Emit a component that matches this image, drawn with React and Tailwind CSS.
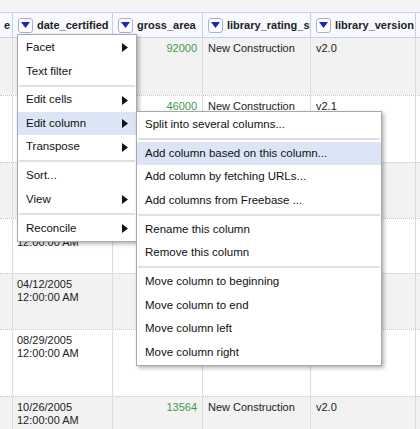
import React from "react";

function DropBtn() {
  return (
    <div className="w-[15px] h-[15px] shrink-0 rounded-[3px] border border-[#a3adea] bg-white flex items-center justify-center">
      <svg width="9" height="6" viewBox="0 0 9 6">
        <polygon points="0,0 9,0 4.5,6" fill="#1e22c8" />
      </svg>
    </div>
  );
}

function HeadCell({ w, label, last }) {
  return (
    <div className={`${w} h-full flex items-center gap-[4px] pl-[5px] overflow-hidden whitespace-nowrap ${last ? "" : "border-r border-[#c9cff0]"}`}>
      <DropBtn />
      <span className="font-bold text-[11px] text-[#222]">{label}</span>
    </div>
  );
}

function Row({ h, gray, top, date, date2, gross, rating, version }) {
  return (
    <div className={`flex ${h} shrink-0 ${gray ? "bg-[#f2f2f2]" : "bg-white"} ${top ? "" : "border-t border-dotted border-[#c8c8c8]"}`}>
      <div className="w-[13px] border-r border-[#dcdcdc]" />
      <div className="w-[100px] border-r border-[#dcdcdc] pl-[4px] pt-[4px] leading-[13px]">
        {date2 && (
          <>
            <div>{date || "\u00a0"}</div>
            <div>{date2}</div>
          </>
        )}
      </div>
      <div className="w-[90px] border-r border-[#dcdcdc] pr-[5px] pt-[4px] leading-[13px] text-right text-[#46984a]">{gross}</div>
      <div className="w-[108px] border-r border-[#dcdcdc] pl-[5px] pt-[4px] leading-[13px] whitespace-nowrap overflow-hidden">{rating}</div>
      <div className="w-[105px] border-r border-[#dcdcdc] pl-[5px] pt-[4px] leading-[13px]">{version}</div>
      <div className="flex-1" />
    </div>
  );
}

function Arrow() {
  return (
    <svg width="6" height="9" viewBox="0 0 6 9" className="absolute right-[8px]">
      <polygon points="0,0 6,4.5 0,9" fill="#111" />
    </svg>
  );
}

function Item({ label, sub, active }) {
  return (
    <div className={`relative h-[23.5px] flex items-center pl-[8px] whitespace-nowrap ${active ? "bg-[#dbe5f6]" : ""}`}>
      <span>{label}</span>
      {sub && <Arrow />}
    </div>
  );
}

function Sep() {
  return (
    <div className="h-[5.33px] flex items-center px-[1px]">
      <div className="h-[2px] w-full bg-[#e0e0e0]" />
    </div>
  );
}

export default function App() {
  return (
    <div className="relative w-[420px] h-[429px] overflow-hidden bg-white font-['Liberation_Sans',Arial,sans-serif] text-[11px] text-[#222]">
      <div className="h-[12px] bg-[#f4f4f4]" />
      <div className="flex h-[26px] bg-[#f8f9fe] border-y border-[#c9cff0]">
        <div className="w-[13px] h-full border-r border-[#c9cff0] flex items-center justify-end pr-[2px] overflow-hidden">
          <span className="font-bold text-[11px]">e</span>
        </div>
        <HeadCell w="w-[100px]" label="date_certified" />
        <HeadCell w="w-[90px]" label="gross_area" />
        <HeadCell w="w-[108px]" label="library_rating_system" />
        <HeadCell w="w-[105px]" label="library_version" />
        <div className="flex-1" />
      </div>
      <div className="flex flex-col">
        <Row h="h-[57px]" gray top gross="92000" rating="New Construction" version="v2.0" />
        <Row h="h-[67px]" gross="46000" rating="New Construction" version="v2.1" />
        <Row h="h-[56px]" gray />
        <Row h="h-[55px]" date2="12:00:00 AM" />
        <Row h="h-[56px]" gray date="04/12/2005" date2="12:00:00 AM" />
        <Row h="h-[67px]" date="08/29/2005" date2="12:00:00 AM" />
        <Row h="h-[60px]" gray date="10/26/2005" date2="12:00:00 AM" gross="13564" rating="New Construction" version="v2.0" />
      </div>

      <div className="absolute left-[17px] top-[34px] w-[120px] bg-white border border-[#a8a8a8] shadow-[2px_2px_4px_rgba(0,0,0,0.3)] py-[1px] text-[11.5px] text-[#111]">
        <Item label="Facet" sub />
        <Item label="Text filter" />
        <Sep />
        <Item label="Edit cells" sub />
        <Item label="Edit column" sub active />
        <Item label="Transpose" sub />
        <Sep />
        <Item label="Sort..." />
        <Item label="View" sub />
        <Sep />
        <Item label="Reconcile" sub />
      </div>

      <div className="absolute left-[136px] top-[111px] w-[246px] bg-white border border-[#a8a8a8] shadow-[2px_2px_4px_rgba(0,0,0,0.3)] py-[1px] text-[11.5px] text-[#111]">
        <Item label="Split into several columns..." />
        <Sep />
        <Item label="Add column based on this column..." active />
        <Item label="Add column by fetching URLs..." />
        <Item label="Add columns from Freebase ..." />
        <Sep />
        <Item label="Rename this column" />
        <Item label="Remove this column" />
        <Sep />
        <Item label="Move column to beginning" />
        <Item label="Move column to end" />
        <Item label="Move column left" />
        <Item label="Move column right" />
      </div>
    </div>
  );
}
